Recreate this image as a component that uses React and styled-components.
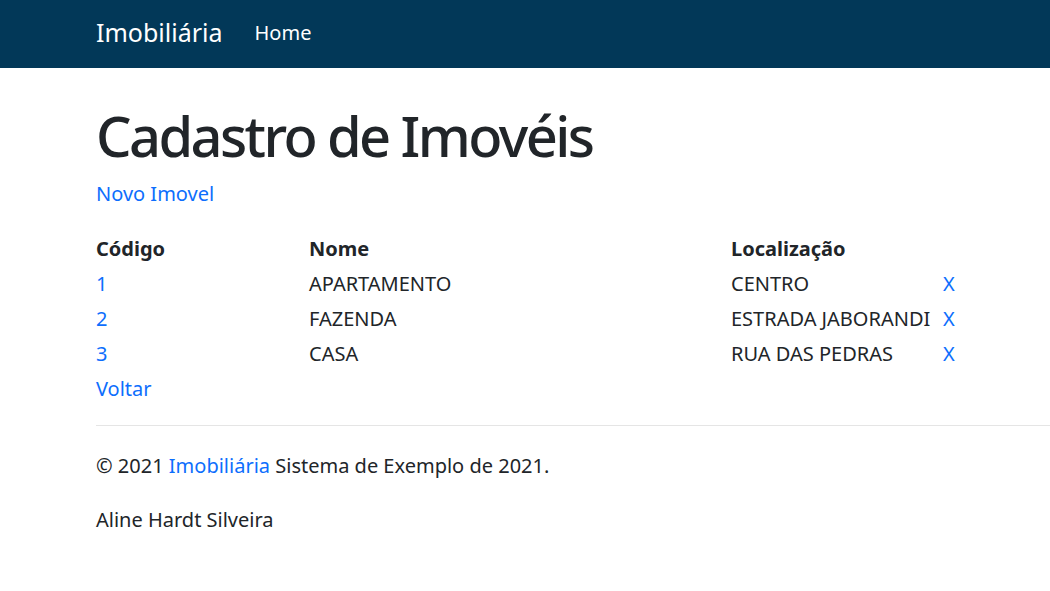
import styled, { createGlobalStyle } from "styled-components";

const Global = createGlobalStyle`
    body {
        margin: 0;
        font-family: "Noto Sans", "Open Sans", sans-serif;
        color: #212529;
        background: #fff;
        overflow: hidden;
    }
`;

const imoveis = [
    { codigo: 1, nome: "APARTAMENTO", localizacao: "CENTRO" },
    { codigo: 2, nome: "FAZENDA", localizacao: "ESTRADA JABORANDI" },
    { codigo: 3, nome: "CASA", localizacao: "RUA DAS PEDRAS" },
];

function App() {
    return (
        <>
            <Global />
            <Navbar>
                <Marca href="#">Imobiliária</Marca>
                <NavLink href="#">Home</NavLink>
            </Navbar>
            <Conteudo>
                <Titulo>Cadastro de Imovéis</Titulo>
                <Link href="#">Novo Imovel</Link>
                <Tabela>
                    <thead>
                        <tr>
                            <Th $w={213}>Código</Th>
                            <Th $w={422}>Nome</Th>
                            <Th $w={212}>Localização</Th>
                            <Th></Th>
                        </tr>
                    </thead>
                    <tbody>
                        {imoveis.map((i) => (
                            <tr key={i.codigo}>
                                <Td><Link href="#">{i.codigo}</Link></Td>
                                <Td>{i.nome}</Td>
                                <Td>{i.localizacao}</Td>
                                <Td><Link href="#">X</Link></Td>
                            </tr>
                        ))}
                    </tbody>
                </Tabela>
                <Link href="#">Voltar</Link>
            </Conteudo>
            <Rodape>
                <Linha />
                <Paragrafo>
                    © 2021 <Link href="#">Imobiliária</Link> Sistema de Exemplo de 2021.
                </Paragrafo>
                <Paragrafo>Aline Hardt Silveira</Paragrafo>
            </Rodape>
        </>
    );
}

const Navbar = styled.nav`
    height: 68px;
    background-color: #023858;
    display: flex;
    align-items: center;
    padding-left: 96px;
    box-sizing: border-box;
`;

const Marca = styled.a`
    color: #fff;
    font-size: 25px;
    text-decoration: none;
    margin-right: 32px;
    margin-top: -4px;
`;

const NavLink = styled.a`
    color: #fff;
    font-size: 20px;
    text-decoration: none;
    margin-top: -4px;
`;

const Conteudo = styled.main`
    padding-left: 96px;
    display: flex;
    flex-direction: column;
    align-items: flex-start;
    font-size: 20px;
`;

const Titulo = styled.h1`
    font-size: 56px;
    font-weight: 500;
    letter-spacing: -2.6px;
    line-height: 1.2;
    margin: 34px 0 7px;
`;

const Link = styled.a`
    color: #0d6efd;
    text-decoration: none;
    font-size: 20px;
    line-height: 35px;
`;

const Tabela = styled.table`
    border-collapse: collapse;
    margin-top: 20px;
`;

const Th = styled.th`
    width: ${(p) => (p.$w ? `${p.$w}px` : "auto")};
    text-align: left;
    font-weight: 700;
    padding: 0;
    height: 35px;
`;

const Td = styled.td`
    padding: 0;
    height: 35px;
    white-space: nowrap;
`;

const Rodape = styled.footer`
    padding-left: 96px;
    font-size: 20px;
`;

const Linha = styled.hr`
    border: 0;
    border-top: 1px solid #e5e5e5;
    margin: 19px 0 22px;
`;

const Paragrafo = styled.p`
    margin: 0 0 22px;
    line-height: 30px;
`;

export default App;
